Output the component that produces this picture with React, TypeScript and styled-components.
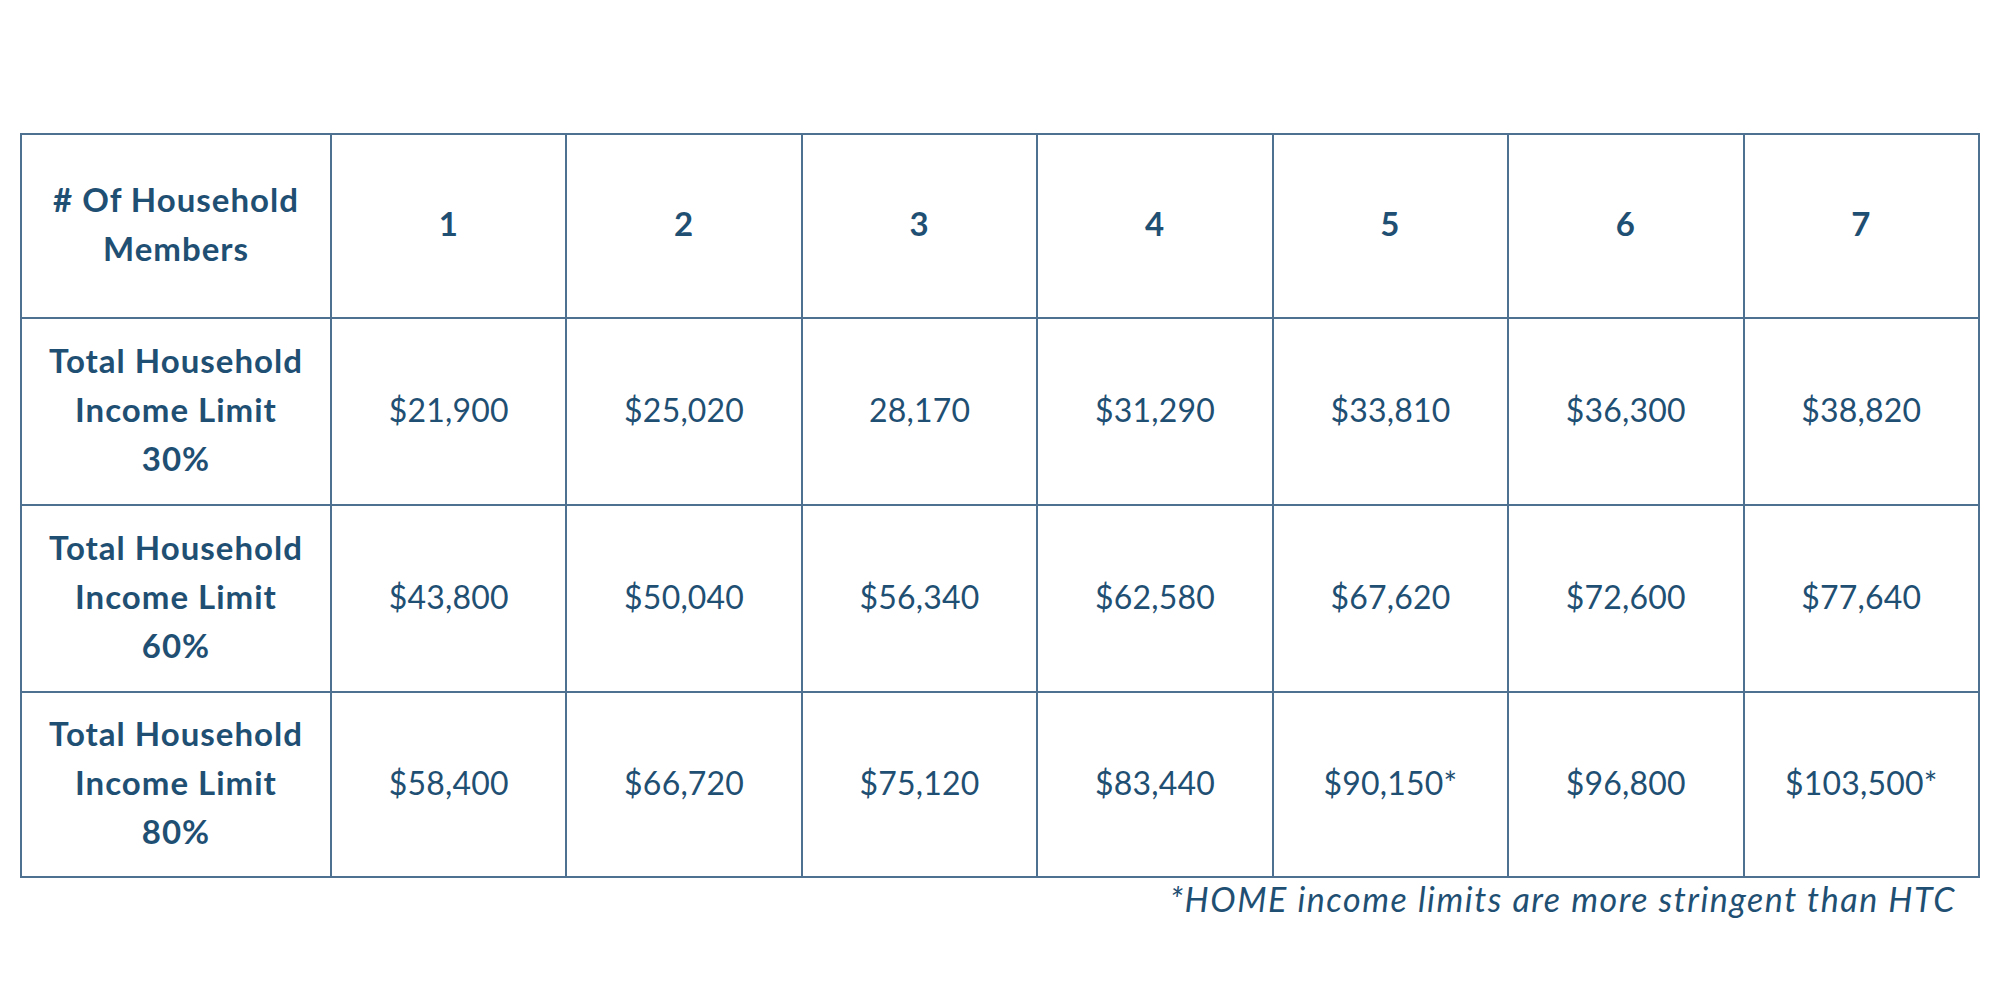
import React from "react";
import styled, { createGlobalStyle } from "styled-components";

const GlobalStyle = createGlobalStyle`
  html, body {
    margin: 0;
    padding: 0;
    background: #ffffff;
  }
  body {
    font-family: "Lato", "Noto Sans", sans-serif;
    color: #1f5073;
  }
`;

const Page = styled.main`
  display: flex;
  flex-direction: column;
  padding: 133px 20px 0 20px;
  width: 1960px;
`;

const Grid = styled.div`
  display: grid;
  grid-template-columns: 310px repeat(7, 1fr);
  grid-template-rows: 184px 187px 187px 185px;
  border-top: 2px solid #4f7191;
  border-left: 2px solid #4f7191;
`;

const Cell = styled.div<{ $head?: boolean }>`
  display: flex;
  align-items: center;
  justify-content: center;
  text-align: center;
  border-right: 2px solid #4f7191;
  border-bottom: 2px solid #4f7191;
  font-size: ${(p) => (p.$head ? "33px" : "32px")};
  font-weight: ${(p) => (p.$head ? 700 : 400)};
  letter-spacing: ${(p) => (p.$head ? "1px" : "0.2px")};
  line-height: 49px;
  color: #1f5073;
  padding: 0 6px 5px 6px;
`;

const Note = styled.p`
  margin: 0;
  align-self: flex-end;
  padding-right: 24px;
  font-size: 34px;
  font-style: italic;
  font-weight: 400;
  letter-spacing: 1.55px;
  line-height: 42px;
  color: #1f5073;
`;

const sizes = ["1", "2", "3", "4", "5", "6", "7"];

const rows = [
  {
    label: ["Total Household", "Income Limit", "30%"],
    values: ["$21,900", "$25,020", "28,170", "$31,290", "$33,810", "$36,300", "$38,820"],
  },
  {
    label: ["Total Household", "Income Limit", "60%"],
    values: ["$43,800", "$50,040", "$56,340", "$62,580", "$67,620", "$72,600", "$77,640"],
  },
  {
    label: ["Total Household", "Income Limit", "80%"],
    values: ["$58,400", "$66,720", "$75,120", "$83,440", "$90,150*", "$96,800", "$103,500*"],
  },
];

function App() {
  return (
    <Page>
      <GlobalStyle />
      <Grid>
        <Cell $head>
          # Of Household
          <br />
          Members
        </Cell>
        {sizes.map((s) => (
          <Cell $head key={s}>
            {s}
          </Cell>
        ))}
        {rows.map((row) => (
          <React.Fragment key={row.label[2]}>
            <Cell $head>
              {row.label[0]}
              <br />
              {row.label[1]}
              <br />
              {row.label[2]}
            </Cell>
            {row.values.map((v, i) => (
              <Cell key={i}>{v}</Cell>
            ))}
          </React.Fragment>
        ))}
      </Grid>
      <Note>*HOME income limits are more stringent than HTC</Note>
    </Page>
  );
}

export default App;
